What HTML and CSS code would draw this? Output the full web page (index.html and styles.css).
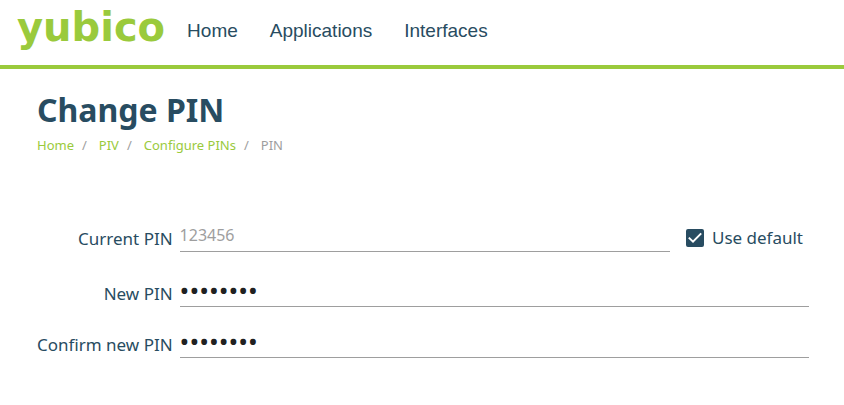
FILE: index.html
```html
<!DOCTYPE html>
<html lang="en">
<head>
  <meta charset="UTF-8" />
  <meta name="viewport" content="width=device-width, initial-scale=1.0" />
  <title>Change PIN</title>
  <link rel="stylesheet" href="styles.css">
</head>
<body>
  <header>
    <a class="logo" href="#home">yubico</a>
    <nav>
      <a href="#home">Home</a>
      <a href="#applications">Applications</a>
      <a href="#interfaces">Interfaces</a>
    </nav>
  </header>

  <main>
    <h1>Change PIN</h1>
    <ol class="breadcrumb">
      <li><a href="#home">Home</a></li>
      <li><a href="#piv">PIV</a></li>
      <li><a href="#pins">Configure PINs</a></li>
      <li>PIN</li>
    </ol>

    <form class="pin-form">
      <label for="current">Current PIN</label>
      <div class="current-row">
        <input class="field" type="text" id="current" value="123456" disabled>
        <label class="check">
          <input type="checkbox" checked>
          <svg viewBox="0 0 18 18" aria-hidden="true"><path d="M2.8 8.6 L7 12.6 L15.2 4.4" /></svg>
          <span>Use default</span>
        </label>
      </div>

      <label for="new">New PIN</label>
      <input class="field password" type="password" id="new" value="12345678">

      <label for="confirm">Confirm new PIN</label>
      <input class="field password" type="password" id="confirm" value="12345678">
    </form>
  </main>
</body>
</html>
```
FILE: styles.css
```css
:root {
  --green: #9aca3c;
  --blue: #284c61;
  --gray: #9e9e9e;
}

* {
  box-sizing: border-box;
}

body {
  margin: 0;
  background: #fff;
  color: var(--blue);
  font-family: "Noto Sans", sans-serif;
}

header {
  display: flex;
  height: 69px;
  padding-left: 17px;
  border-bottom: 4px solid var(--green);
}

header a {
  text-decoration: none;
}

.logo {
  color: var(--green);
  font: bold 40px/54px "DejaVu Sans", sans-serif;
}

nav {
  display: flex;
  gap: 32px;
  padding: 20px 0 0 22px;
}

nav a {
  color: var(--blue);
  font: 19px/22px "Liberation Sans", sans-serif;
}

main {
  padding: 20px 35px 0 37px;
}

h1 {
  margin: 0;
  font-size: 32px;
  line-height: 42px;
}

.breadcrumb {
  display: flex;
  margin: 4px 0 0;
  padding: 0;
  list-style: none;
  color: var(--gray);
  font-size: 13px;
  line-height: 20px;
}

.breadcrumb a {
  color: var(--green);
  text-decoration: none;
}

.breadcrumb li + li::before {
  content: "/";
  padding: 0 12px 0 8px;
}

.pin-form {
  display: grid;
  grid-template-columns: max-content 1fr;
  column-gap: 7px;
  row-gap: 17px;
  margin-top: 63px;
  font-size: 17px;
  line-height: 24px;
}

.pin-form > label {
  align-self: center;
  padding-top: 8px;
  text-align: right;
}

.pin-form > label:first-child {
  padding-top: 4px;
}

.current-row {
  display: flex;
  align-items: center;
  gap: 16px;
  padding-bottom: 4px;
}

.field {
  width: 100%;
  min-width: 0;
  height: 34px;
  padding: 0;
  border: 0;
  border-bottom: 1px solid var(--gray);
  background: none;
  color: #212121;
  font: 16px/24px "Noto Sans", sans-serif;
  outline: none;
}

.field:disabled {
  color: var(--gray);
}

.password {
  font-size: 26px;
}

.check {
  display: grid;
  flex: none;
  grid-template-columns: 18px auto;
  align-items: center;
  column-gap: 8px;
  margin-right: 6px;
  padding-top: 6px;
}

.check input {
  grid-area: 1 / 1;
  width: 18px;
  height: 18px;
  margin: 0;
  appearance: none;
  border: 2px solid var(--blue);
  border-radius: 2px;
}

.check input:checked {
  background: var(--blue);
}

.check svg {
  grid-area: 1 / 1;
  width: 18px;
  height: 18px;
  fill: none;
  stroke: #fff;
  stroke-width: 2;
  pointer-events: none;
}

.check input:not(:checked) + svg {
  visibility: hidden;
}
```
